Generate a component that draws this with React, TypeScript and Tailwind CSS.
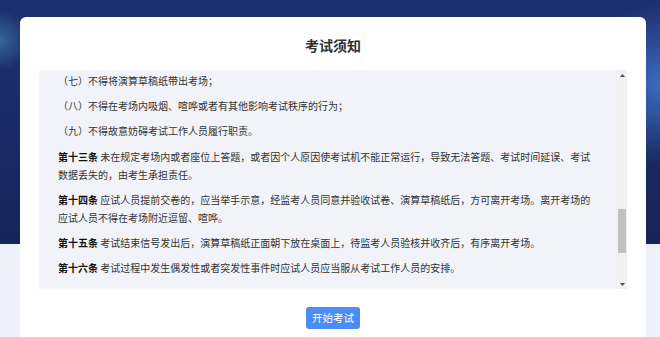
import React from 'react';

const rules: { head?: string; text: string }[] = [
  { text: '（七）不得将演算草稿纸带出考场；' },
  { text: '（八）不得在考场内吸烟、喧哗或者有其他影响考试秩序的行为；' },
  { text: '（九）不得故意妨碍考试工作人员履行职责。' },
  {
    head: '第十三条',
    text: '未在规定考场内或者座位上答题，或者因个人原因使考试机不能正常运行，导致无法答题、考试时间延误、考试数据丢失的，由考生承担责任。',
  },
  {
    head: '第十四条',
    text: '应试人员提前交卷的，应当举手示意，经监考人员同意并验收试卷、演算草稿纸后，方可离开考场。离开考场的应试人员不得在考场附近逗留、喧哗。',
  },
  {
    head: '第十五条',
    text: '考试结束信号发出后，演算草稿纸正面朝下放在桌面上，待监考人员验核并收齐后，有序离开考场。',
  },
  {
    head: '第十六条',
    text: '考试过程中发生偶发性或者突发性事件时应试人员应当服从考试工作人员的安排。',
  },
];

const Arrow: React.FC<{ down?: boolean }> = ({ down }) => (
  <div className="h-[10px] flex items-center justify-center">
    <svg width="5" height="3" viewBox="0 0 5 3">
      <path d={down ? 'M0 0 L5 0 L2.5 3 Z' : 'M0 3 L5 3 L2.5 0 Z'} fill="#505050" />
    </svg>
  </div>
);

const App: React.FC = () => {
  return (
    <div
      className="h-[337px] w-full overflow-hidden pt-[17px] pl-[20px] pr-[14px] bg-[radial-gradient(circle_at_100%_25%,rgba(64,118,210,0.85),transparent_80px),radial-gradient(circle_at_0%_12%,rgba(80,170,210,0.45),transparent_30px),linear-gradient(180deg,#1e3070_0px,#172459_244px,#eef0f9_244px)]"
      style={{ fontFamily: '"Noto Sans CJK SC", "Noto Sans", sans-serif' }}
    >
      <div className="bg-white rounded-[6px] h-[330px] flex flex-col">
        <h1 className="pt-[19px] mb-[16px] text-center text-[14px] leading-[18px] font-bold text-[#303133]">
          考试须知
        </h1>

        <div className="mx-[19px] h-[219px] bg-[#f2f3f8] flex">
          <div className="flex-1 overflow-hidden pt-[2px] pl-[19px] pr-[21px] flex flex-col gap-[7.2px] text-[10px] leading-[18px] text-[#333]">
            {rules.map((r, i) => (
              <p key={i}>
                {r.head && <span className="font-bold text-[#111]">{r.head} </span>}
                {r.text}
              </p>
            ))}
          </div>
          <div className="w-[10px] bg-[#f1f1f1] flex flex-col">
            <Arrow />
            <div className="h-[129px]" />
            <div className="h-[44px] mx-px bg-[#c1c1c1]" />
            <div className="flex-1" />
            <Arrow down />
          </div>
        </div>

        <div className="mt-[18px] flex justify-center">
          <button className="h-[22px] px-[6px] rounded-[3px] bg-[#4b8cf5] text-white text-[10.5px] leading-[22px]">
            开始考试
          </button>
        </div>
      </div>
    </div>
  );
};

export default App;
